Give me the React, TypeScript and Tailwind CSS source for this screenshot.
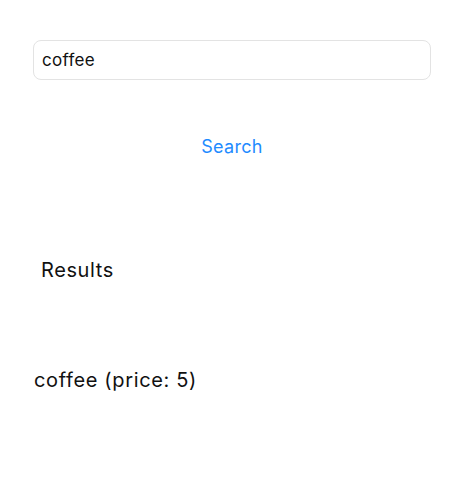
export default function App() {
  const results = [{ name: "coffee", price: 5 }];

  return (
    <main
      className="flex flex-col w-[464px] h-[481px] bg-white text-[#111]"
      style={{ fontFamily: "Inter, 'Noto Sans', sans-serif" }}
    >
      <div className="pt-10 px-[33px]">
        <input
          className="w-full h-10 rounded-lg border border-[#e3e3e3] pl-[8px] text-[17px] tracking-[0.3px] text-[#111] outline-none"
          defaultValue="coffee"
        />
      </div>

      <div className="flex justify-center mt-[56px]">
        <button className="text-[18px] leading-[22px] tracking-[0.3px] text-[#1f8bff]">Search</button>
      </div>

      <span className="mt-[100px] pl-[41px] text-[20px] leading-6 tracking-[0.6px]">Results</span>

      <ul className="mt-[86px] pl-[34px]">
        {results.map((item) => (
          <li key={item.name} className="text-[20px] leading-6 tracking-[0.65px]">
            {item.name} (price: {item.price})
          </li>
        ))}
      </ul>
    </main>
  );
}
